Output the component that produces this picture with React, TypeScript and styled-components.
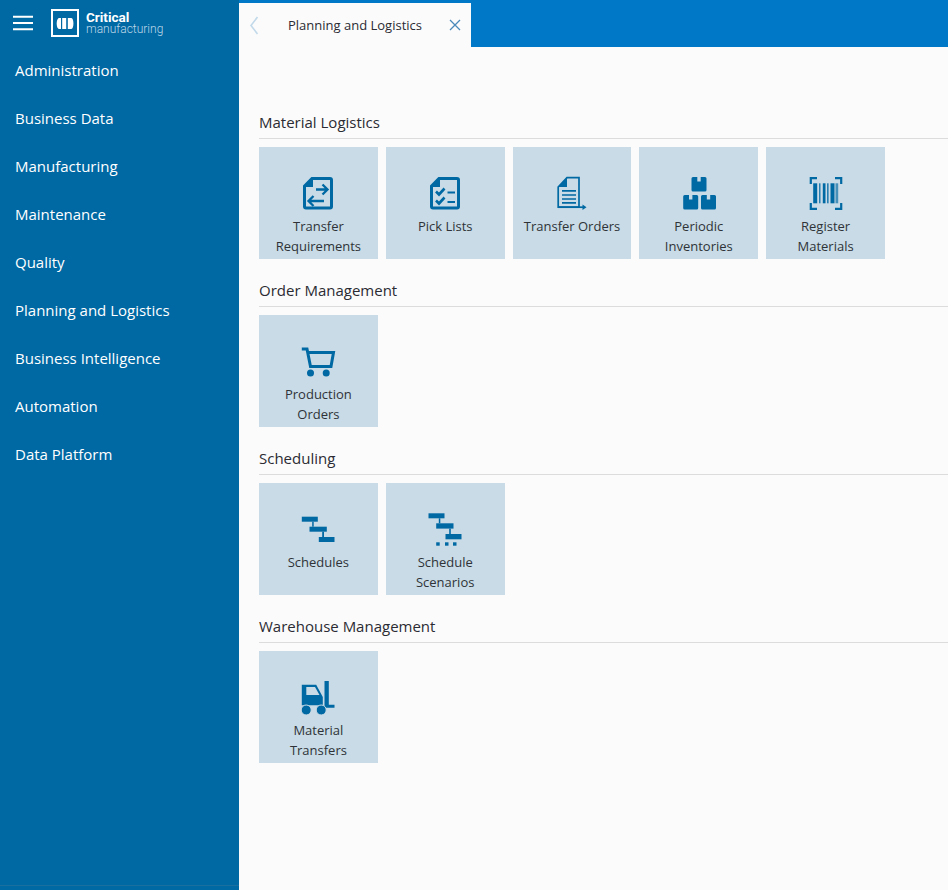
import React from "react";
import styled, { createGlobalStyle } from "styled-components";

const GlobalStyle = createGlobalStyle`
  html, body {
    margin: 0;
    padding: 0;
    height: 100%;
    background: #fbfbfb;
    font-family: "Open Sans", "Liberation Sans", sans-serif;
  }
  * {
    box-sizing: border-box;
  }
`;

const Page = styled.div`
  display: flex;
  width: 948px;
  height: 890px;
  overflow: hidden;
`;

const Sidebar = styled.aside`
  width: 239px;
  flex-shrink: 0;
  display: flex;
  flex-direction: column;
  background: #0068a3;
`;

const Brand = styled.div`
  height: 46px;
  display: flex;
  align-items: flex-start;
  padding: 9px 0 0 13px;
`;

const BrandText = styled.div`
  margin-left: 7px;
  display: flex;
  flex-direction: column;
  font-family: Roboto, "Liberation Sans", sans-serif;
`;

const BrandName = styled.span`
  font-size: 13.5px;
  font-weight: 700;
  line-height: 13px;
  margin-top: 2px;
  color: #fff;
`;

const BrandSub = styled.span`
  font-size: 12px;
  font-weight: 300;
  line-height: 11px;
  color: #bcd7e8;
`;

const Burger = styled.svg`
  margin: 6px 18px 0 0;
`;

const NavList = styled.nav`
  flex: 1;
  display: flex;
  flex-direction: column;
`;

const NavItem = styled.a`
  height: 48px;
  padding-left: 15px;
  display: flex;
  align-items: center;
  color: #fff;
  font-size: 15px;
`;

const SideFoot = styled.div`
  height: 5px;
  border-top: 1px solid #1a6f9f;
`;

const Main = styled.main`
  flex: 1;
  min-width: 0;
  display: flex;
  flex-direction: column;
`;

const TopBar = styled.header`
  height: 47px;
  padding-top: 3px;
  flex-shrink: 0;
  display: flex;
  background: #0078c8;
`;

const Tab = styled.div`
  width: 232px;
  display: flex;
  align-items: center;
  background: #fbfbfb;
  color: #2b2b33;
  font-size: 13px;
`;

const TabBack = styled.svg`
  margin: 0 29px 0 10px;
`;

const TabLabel = styled.span`
  flex: 1;
`;

const TabClose = styled.svg`
  margin-right: 10px;
`;

const Content = styled.div`
  padding: 63px 0 0 20px;
`;

const Section = styled.section`
  margin-bottom: 19px;
`;

const SectionTitle = styled.h2`
  margin: 0 0 8px;
  height: 29px;
  padding-top: 1px;
  border-bottom: 1px solid #dcdcdc;
  font-size: 15px;
  font-weight: 400;
  line-height: 22px;
  color: #2b2b33;
`;

const Tiles = styled.div`
  display: flex;
  gap: 8px;
`;

const Tile = styled.a`
  width: 118.8px;
  height: 112px;
  padding: 26px 9px 0;
  display: flex;
  flex-direction: column;
  align-items: center;
  background: #c8dbe6;
  color: #2f3338;
  font-size: 13px;
  line-height: 20px;
  text-align: center;
`;

const TileIcon = styled.svg`
  width: 40px;
  height: 40px;
  flex-shrink: 0;
  margin-bottom: 3px;
  color: #0068a3;
`;

const TransferIcon = () => (
  <TileIcon viewBox="0 0 40 40" fill="none">
    <path d="M14 5.5H32a1.5 1.5 0 0 1 1.5 1.5V33.5a1.5 1.5 0 0 1-1.5 1.5H8a1.5 1.5 0 0 1-1.5-1.5V13z" stroke="currentColor" strokeWidth="3" />
    <path d="M5.5 14L15 4.5V14z" fill="currentColor" />
    <path d="M18 16.5H29M24.5 11.5L29.5 16.5 24.5 21.5M26 28H11M15.5 23L10.5 28 15.5 33" stroke="currentColor" strokeWidth="2.3" />
  </TileIcon>
);

const PickIcon = () => (
  <TileIcon viewBox="0 0 40 40" fill="none">
    <path d="M14 5.5H32a1.5 1.5 0 0 1 1.5 1.5V33.5a1.5 1.5 0 0 1-1.5 1.5H8a1.5 1.5 0 0 1-1.5-1.5V13z" stroke="currentColor" strokeWidth="3" />
    <path d="M5.5 14L15 4.5V14z" fill="currentColor" />
    <path d="M11 18.5L14 21.5 19.5 15.5M11 27.5L14 30.5 19.5 24.5" stroke="currentColor" strokeWidth="2.6" />
    <path d="M22.5 19.5H30M22.5 29H30" stroke="currentColor" strokeWidth="2.2" />
  </TileIcon>
);

const OrdersIcon = () => (
  <TileIcon viewBox="0 0 40 40" fill="none">
    <path d="M15 4.7H27V34.2H6.2V14z" stroke="currentColor" strokeWidth="1.7" />
    <path d="M5.7 14L15 4.5V14z" fill="currentColor" />
    <path d="M10 17.8H24M10 22H24M10 26H24M10 29.8H24" stroke="currentColor" strokeWidth="1.7" />
    <path d="M6 34.2H31" stroke="currentColor" strokeWidth="1.7" />
    <path d="M30.5 31.5L34.5 34.2 30.5 37z" fill="currentColor" />
  </TileIcon>
);

const boxPath = (x: number, y: number) =>
  `M${x + 1.5} ${y}H${x + 5.8}V${y + 4.5}H${x + 9.2}V${y}H${x + 13.5}a1.5 1.5 0 0 1 1.5 1.5V${y + 13}a1.5 1.5 0 0 1-1.5 1.5H${x + 1.5}a1.5 1.5 0 0 1-1.5-1.5V${y + 1.5}a1.5 1.5 0 0 1 1.5-1.5z`;

const InventoryIcon = () => (
  <TileIcon viewBox="0 0 40 40" fill="currentColor">
    <path d={boxPath(12.5, 4)} />
    <path d={boxPath(4.2, 22)} />
    <path d={boxPath(22, 22)} />
  </TileIcon>
);

const BarcodeIcon = () => (
  <TileIcon viewBox="0 0 40 40" fill="none">
    <path d="M11 5.2H4.8V11M29 5.2H35.2V11M11 35.8H4.8V30M29 35.8H35.2V30" stroke="currentColor" strokeWidth="2.2" />
    <g fill="currentColor">
      <rect x="7.2" y="10.3" width="4" height="20" />
      <rect x="13.2" y="10.3" width="1.2" height="20" />
      <rect x="16.8" y="10.3" width="2.7" height="20" />
      <rect x="21.2" y="10.3" width="1.3" height="20" />
      <rect x="24.5" y="10.3" width="4" height="20" />
      <rect x="29.5" y="10.3" width="2.7" height="20" opacity="0.65" />
    </g>
  </TileIcon>
);

const CartIcon = () => (
  <TileIcon viewBox="0 0 40 40" fill="none">
    <path d="M3.8 8H9L12.5 25.5H33L35.5 11.5H9.5" stroke="currentColor" strokeWidth="3" />
    <circle cx="12.5" cy="32" r="3.5" fill="currentColor" />
    <circle cx="28.2" cy="32" r="3.5" fill="currentColor" />
  </TileIcon>
);

const ScheduleIcon = () => (
  <TileIcon viewBox="0 0 40 40" fill="currentColor">
    <rect x="3.8" y="7.7" width="16" height="5" />
    <rect x="14.2" y="12.7" width="1.5" height="5" />
    <rect x="11.5" y="17.7" width="17.3" height="5" />
    <rect x="24.2" y="22.7" width="1.8" height="5.3" />
    <rect x="20.8" y="28" width="15.7" height="5" />
  </TileIcon>
);

const ScenarioIcon = () => (
  <TileIcon viewBox="0 0 40 40" fill="currentColor">
    <rect x="3.5" y="4.3" width="16" height="5" />
    <rect x="13.8" y="9.3" width="1.5" height="5" />
    <rect x="11.2" y="14.3" width="17.3" height="5.3" />
    <rect x="24.2" y="19.6" width="1.6" height="5.4" />
    <rect x="20.5" y="25" width="16" height="5.3" />
    <rect x="11.2" y="33.3" width="3.5" height="3.4" />
    <rect x="20" y="33.3" width="3.5" height="3.4" />
    <rect x="28" y="33.3" width="3.5" height="3.4" />
  </TileIcon>
);

const ForkliftIcon = () => (
  <TileIcon viewBox="0 0 40 40" fill="currentColor">
    <path
      fillRule="evenodd"
      d="M3.8 7.7H18.2L24.8 20V28.3H3.8zM8.3 10V18H21.5L17 10z"
    />
    <path d="M26.5 4H30.8V27.7H36.5V30.7H26.5z" />
    <circle cx="8.2" cy="33" r="5" stroke="#c8dbe6" strokeWidth="1" />
    <circle cx="23.2" cy="33" r="5" stroke="#c8dbe6" strokeWidth="1" />
  </TileIcon>
);

const navItems = [
  "Administration",
  "Business Data",
  "Manufacturing",
  "Maintenance",
  "Quality",
  "Planning and Logistics",
  "Business Intelligence",
  "Automation",
  "Data Platform",
];

const sections = [
  {
    title: "Material Logistics",
    tiles: [
      { label: "Transfer Requirements", icon: <TransferIcon /> },
      { label: "Pick Lists", icon: <PickIcon /> },
      { label: "Transfer Orders", icon: <OrdersIcon /> },
      { label: "Periodic Inventories", icon: <InventoryIcon /> },
      { label: "Register Materials", icon: <BarcodeIcon /> },
    ],
  },
  {
    title: "Order Management",
    tiles: [{ label: "Production Orders", icon: <CartIcon /> }],
  },
  {
    title: "Scheduling",
    tiles: [
      { label: "Schedules", icon: <ScheduleIcon /> },
      { label: "Schedule Scenarios", icon: <ScenarioIcon /> },
    ],
  },
  {
    title: "Warehouse Management",
    tiles: [{ label: "Material Transfers", icon: <ForkliftIcon /> }],
  },
];

const App = () => {
  return (
    <Page>
      <GlobalStyle />
      <Sidebar>
        <Brand>
          <Burger width="20" height="16" viewBox="0 0 20 16" fill="none">
            <path d="M0 1.7H20M0 8H20M0 14.3H20" stroke="#fff" strokeWidth="2" />
          </Burger>
          <svg width="28" height="28" viewBox="0 0 28 28" fill="none">
            <rect x="1" y="1" width="26" height="26" stroke="#fff" strokeWidth="2" />
            <path d="M10 9V20H8.5C6.5 20 5.7 17.5 5.7 14.5S6.5 9 8.5 9z" fill="#fff" />
            <rect x="11.2" y="9" width="4" height="11" fill="#fff" />
            <path d="M16.8 9H20C21.6 9 22.4 11 22.4 14.5S21.6 20 20 20H16.8z" fill="#fff" />
          </svg>
          <BrandText>
            <BrandName>Critical</BrandName>
            <BrandSub>manufacturing</BrandSub>
          </BrandText>
        </Brand>
        <NavList>
          {navItems.map((item) => (
            <NavItem key={item}>{item}</NavItem>
          ))}
        </NavList>
        <SideFoot />
      </Sidebar>
      <Main>
        <TopBar>
          <Tab>
            <TabBack width="10" height="20" viewBox="0 0 10 20" fill="none">
              <path d="M8.5 2L2 10.5 8.5 19" stroke="#c2d9ea" strokeWidth="1.6" />
            </TabBack>
            <TabLabel>Planning and Logistics</TabLabel>
            <TabClose width="12" height="12" viewBox="0 0 12 12" fill="none">
              <path d="M1 1L11 11M11 1L1 11" stroke="#4a8abb" strokeWidth="1.3" />
            </TabClose>
          </Tab>
        </TopBar>
        <Content>
          {sections.map((section) => (
            <Section key={section.title}>
              <SectionTitle>{section.title}</SectionTitle>
              <Tiles>
                {section.tiles.map((tile) => (
                  <Tile key={tile.label}>
                    {tile.icon}
                    {tile.label}
                  </Tile>
                ))}
              </Tiles>
            </Section>
          ))}
        </Content>
      </Main>
    </Page>
  );
};

export default App;
